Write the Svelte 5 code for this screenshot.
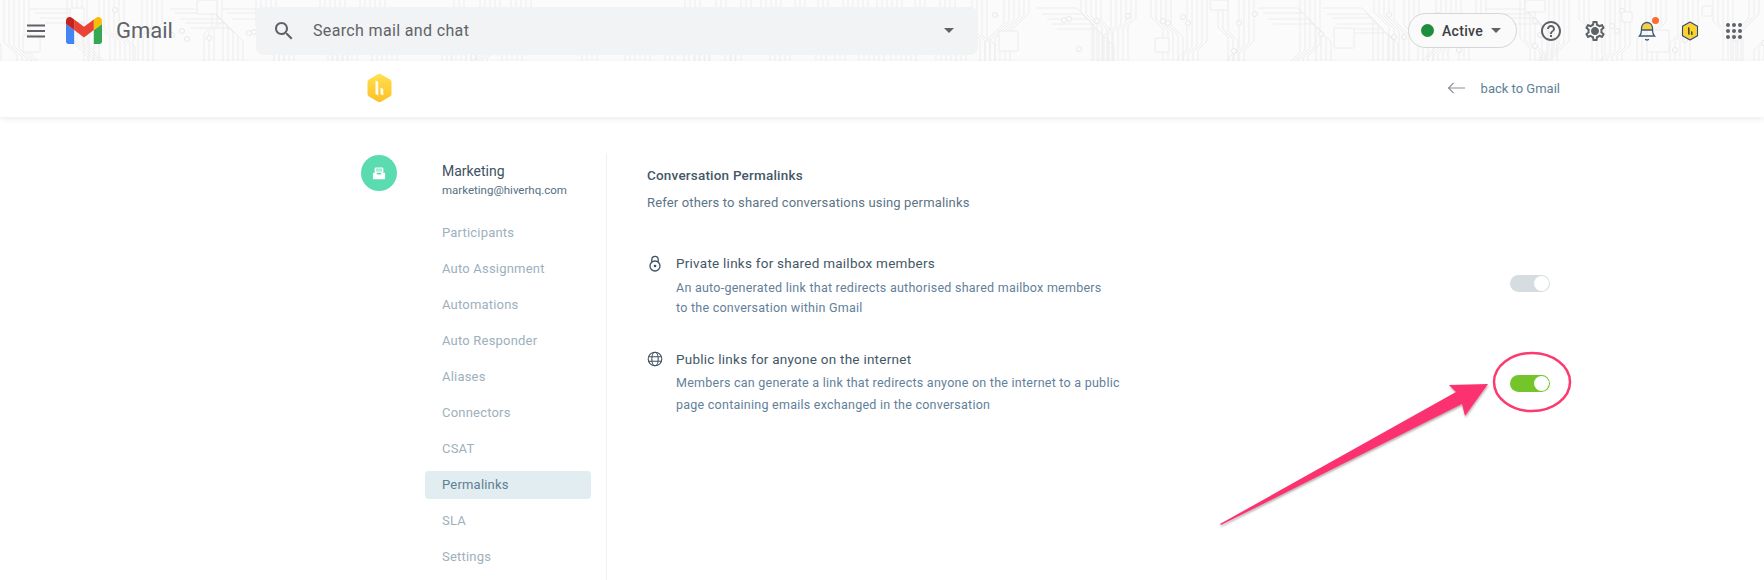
<script lang="ts">
	const navItems = [
		'Participants',
		'Auto Assignment',
		'Automations',
		'Auto Responder',
		'Aliases',
		'Connectors',
		'CSAT',
		'Permalinks',
		'SLA',
		'Settings'
	];

	// Circuit board texture: bundles of parallel traces with 45 degree bends
	function buildTraces() {
		let seed = 4242;
		const rnd = () => {
			seed = (seed * 16807) % 2147483647;
			return seed / 2147483647;
		};
		const paths: string[] = [];
		const pads: { x: number; y: number }[] = [];
		let x = -20;
		while (x < 1780) {
			const lines = 3 + Math.floor(rnd() * 4);
			const gap = 5;
			const dir = rnd() < 0.5 ? -1 : 1;
			const bend = 8 + Math.floor(rnd() * 14);
			const split = 10 + Math.floor(rnd() * 34);
			const horizontal = rnd() < 0.25;
			for (let i = 0; i < lines; i++) {
				const lx = x + i * gap;
				const off = dir > 0 ? i * 2 : (lines - i) * 2;
				const top = split + off;
				if (horizontal) {
					const yy = 8 + i * gap + Math.floor(rnd() * 2);
					paths.push(`M${lx - 10} ${yy}L${lx + 30} ${yy}L${lx + 30 + bend} ${yy + bend}L${lx + 30 + bend} 62`);
				} else {
					paths.push(`M${lx} -2L${lx} ${top}L${lx + dir * bend} ${top + bend}L${lx + dir * bend} 62`);
				}
				if (rnd() < 0.3) pads.push({ x: lx + dir * bend, y: 10 + Math.floor(rnd() * 42) });
			}
			x += lines * gap + 4 + Math.floor(rnd() * 10);
		}
		return { paths, pads };
	}

	const traces = buildTraces();
	const chips = [
		{ x: 23, y: 35, w: 17, h: 17 },
		{ x: 197, y: 0, w: 20, h: 14 },
		{ x: 70, y: 8, w: 14, h: 14 },
		{ x: 999, y: 31, w: 19, h: 20 },
		{ x: 1334, y: 28, w: 20, h: 20 },
		{ x: 1525, y: 0, w: 20, h: 12 },
		{ x: 1647, y: 30, w: 22, h: 22 },
		{ x: 1622, y: 12, w: 10, h: 10 },
		{ x: 1702, y: 6, w: 10, h: 10 },
		{ x: 1210, y: 0, w: 18, h: 10 },
		{ x: 1155, y: 38, w: 14, h: 14 }
	];
</script>

<header class="topbar">
	<svg class="circuit" width="1764" height="61" aria-hidden="true">
		{#each traces.paths as d}
			<path {d} fill="none" stroke="#ededed" stroke-width="1" />
		{/each}
		{#each traces.pads as p}
			<circle cx={p.x} cy={p.y} r="2.500" fill="#fbfbfb" stroke="#e9e9e9" />
		{/each}
		{#each chips as c}
			<rect x={c.x} y={c.y} width={c.w} height={c.h} rx="1" fill="#fbfbfb" stroke="#ececec" />
		{/each}
	</svg>

	<div class="brand">
		<svg class="menu" width="18" height="14" viewBox="0 0 18 14" aria-hidden="true">
			<path d="M0 1.500h18M0 7h18M0 12.500h18" stroke="#5f6368" stroke-width="2" />
		</svg>
		<svg class="m-logo" width="36" height="27" viewBox="52 42 88 66" aria-hidden="true">
			<path fill="#4285f4" d="M58 108h14V74L52 59v43c0 3.320 2.690 6 6 6" />
			<path fill="#34a853" d="M120 108h14c3.320 0 6-2.690 6-6V59l-20 15" />
			<path fill="#fbbc04" d="M120 48v26l20-15v-8c0-7.420-8.470-11.650-14.400-7.200" />
			<path fill="#ea4335" d="M72 74V48l24 18 24-18v26L96 92" />
			<path fill="#c5221f" d="M52 51v8l20 15V48l-5.600-4.200c-5.940-4.450-14.400-.22-14.400 7.200" />
		</svg>
		<span class="wordmark">Gmail</span>
	</div>

	<div class="search">
		<svg width="24" height="24" viewBox="0 0 24 24" fill="#5f6368" aria-hidden="true">
			<path
				d="M15.500 14h-.79l-.28-.27C15.410 12.590 16 11.110 16 9.500 16 5.910 13.090 3 9.500 3S3 5.910 3 9.500 5.910 16 9.500 16c1.610 0 3.090-.59 4.230-1.570l.27.28v.79l5 4.990L20.490 19l-4.990-5zm-6 0C7.010 14 5 11.990 5 9.500S7.010 5 9.500 5 14 7.010 14 9.500 11.990 14 9.500 14z"
			/>
		</svg>
		<span class="search-text">Search mail and chat</span>
		<span class="caret search-caret"></span>
	</div>

	<div class="tools">
		<div class="status">
			<span class="dot"></span>
			<span class="status-label">Active</span>
			<span class="caret small"></span>
		</div>
		<svg class="help" width="24" height="24" viewBox="0 0 24 24" fill="#5f6368" aria-hidden="true">
			<path
				d="M11 18h2v-2h-2v2zm1-16C6.480 2 2 6.480 2 12s4.480 10 10 10 10-4.480 10-10S17.520 2 12 2zm0 18c-4.410 0-8-3.590-8-8s3.590-8 8-8 8 3.590 8 8-3.590 8-8 8zm0-14c-2.210 0-4 1.790-4 4h2c0-1.100.9-2 2-2s2 .9 2 2c0 2-3 1.750-3 5h2c0-2.250 3-2.500 3-5 0-2.210-1.790-4-4-4z"
			/>
		</svg>
		<svg class="gear" width="24" height="24" viewBox="0 0 24 24" fill="#5f6368" aria-hidden="true">
			<path
				d="M19.430 12.980c.04-.32.07-.64.07-.98s-.03-.66-.07-.98l2.110-1.650c.19-.15.24-.42.12-.64l-2-3.460c-.12-.22-.39-.3-.61-.22l-2.490 1c-.52-.4-1.080-.73-1.690-.98l-.38-2.650C14.460 2.180 14.250 2 14 2h-4c-.25 0-.46.18-.49.42l-.38 2.650c-.61.25-1.170.59-1.690.98l-2.490-1c-.23-.09-.49 0-.61.22l-2 3.460c-.13.22-.07.49.12.64l2.110 1.650c-.04.32-.07.65-.07.98s.03.66.07.98l-2.110 1.650c-.19.15-.24.42-.12.64l2 3.460c.12.22.39.3.61.22l2.490-1c.52.4 1.080.73 1.690.98l.38 2.650c.03.24.24.42.49.42h4c.25 0 .46-.18.49-.42l.38-2.650c.61-.25 1.170-.59 1.690-.98l2.490 1c.23.09.49 0 .61-.22l2-3.460c.12-.22.07-.49-.12-.64l-2.110-1.650zM17.450 11.270c.04.31.05.52.05.73 0 .21-.02.43-.05.73l-.14 1.130.89.7 1.080.84-.7 1.210-1.270-.51-1.040-.42-.9.68c-.43.32-.84.56-1.250.73l-1.060.43-.16 1.130-.2 1.350h-1.400l-.19-1.350-.16-1.130-1.060-.43c-.43-.18-.83-.41-1.230-.71l-.91-.7-1.060.43-1.270.51-.7-1.210 1.080-.84.89-.7-.14-1.130c-.03-.31-.05-.54-.05-.74s.02-.43.05-.73l.14-1.130-.89-.7-1.080-.84.7-1.210 1.270.51 1.040.42.9-.68c.43-.32.84-.56 1.250-.73l1.060-.43.16-1.130.2-1.350h1.390l.19 1.350.16 1.130 1.060.43c.43.18.83.41 1.230.71l.91.7 1.060-.43 1.270-.51.7 1.210-1.070.85-.89.7.14 1.130zM12 8c-2.210 0-4 1.790-4 4s1.790 4 4 4 4-1.790 4-4-1.790-4-4-4z"
			/>
		</svg>
		<span class="bell-wrap">
			<svg width="22" height="24" viewBox="0 0 22 24" aria-hidden="true">
				<path d="M5.500 11V9a5.500 5.500 0 0 1 11 0v2z" fill="#f6cf47" />
				<path
					d="M3.500 17c1.600-1.600 2-3 2-6V9a5.500 5.500 0 0 1 11 0v2c0 3 .4 4.400 2 6zM5.500 11h11M9.500 20.500c1 .7 2 .7 3 0"
					fill="none"
					stroke="#3c5a78"
					stroke-width="1.300"
					stroke-linecap="round"
				/>
			</svg>
			<span class="bell-dot"></span>
		</span>
		<svg class="hiver-small" width="18" height="20" viewBox="0 0 18 20" aria-hidden="true">
			<path d="M9 1l7.500 4.300v9.400L9 19l-7.500-4.300V5.300z" fill="#fcd22c" stroke="#2e4a7d" stroke-width="1.100" stroke-linejoin="round" />
			<path d="M7 6l1.600.8v7.200L7 13.200zM10 10l1.500.8v3.400l-1.500-.8z" fill="#4b4a2c" />
		</svg>
		<svg class="apps" width="16" height="16" viewBox="0 0 16 16" fill="#5f6368" aria-hidden="true">
			{#each [2, 8, 14] as cy}
				{#each [2, 8, 14] as cx}
					<circle {cx} {cy} r="2" />
				{/each}
			{/each}
		</svg>
	</div>
</header>

<div class="subbar">
	<svg width="27" height="30" viewBox="2 0 24 30" aria-hidden="true">
		<defs>
			<linearGradient id="hex" x1="0" y1="0" x2="0" y2="1">
				<stop offset="0" stop-color="#ffe04f" />
				<stop offset="1" stop-color="#fdbf26" />
			</linearGradient>
		</defs>
		<path
			d="M12.500 1.200a3 3 0 0 1 3 0l9 5.200a3 3 0 0 1 1.500 2.600v12a3 3 0 0 1-1.500 2.600l-9 5.200a3 3 0 0 1-3 0l-9-5.200A3 3 0 0 1 2 21V9a3 3 0 0 1 1.500-2.600z"
			fill="url(#hex)"
		/>
		<path d="M10 7.500l2.800 1.400v13.500L10 21zM15 14.500l2.800 1.400v6.500L15 21z" fill="#fff" opacity="0.92" />
	</svg>
	<div class="back">
		<svg width="19" height="12" viewBox="0 0 19 12" aria-hidden="true">
			<path d="M18 6H1.500M6.500 1L1.500 6l5 5" fill="none" stroke="#8a9299" stroke-width="1.100" />
		</svg>
		<span>back to Gmail</span>
	</div>
</div>

<main class="page">
	<div class="avatar">
		<svg width="14" height="13" viewBox="0 0 16 14" aria-hidden="true">
			<path d="M3 1.500A1.500 1.500 0 0 1 4.500 0h7A1.500 1.500 0 0 1 13 1.500V6H3z" fill="#fff" />
			<path d="M4.500 2h7M4.500 4h7" stroke="#5bdcb0" stroke-width="1" />
			<path d="M1 7a1 1 0 0 1 1-1h3.500v2h5V6H14a1 1 0 0 1 1 1v5.500a1 1 0 0 1-1 1H2a1 1 0 0 1-1-1z" fill="#fff" />
		</svg>
	</div>

	<nav class="sidebar">
		<div class="mailbox-name">Marketing</div>
		<div class="mailbox-email">marketing@hiverhq.com</div>
		<ul>
			{#each navItems as item}
				<li class:active={item === 'Permalinks'}>{item}</li>
			{/each}
		</ul>
	</nav>

	<section class="content">
		<h1>Conversation Permalinks</h1>
		<p class="lead">Refer others to shared conversations using permalinks</p>

		<div class="setting first">
			<svg class="setting-icon" width="16" height="18" viewBox="0 0 16 18" aria-hidden="true">
				<g fill="none" stroke="#3f5261" stroke-width="1.300">
					<circle cx="8" cy="11" r="5" />
					<path d="M4.800 7V4.500a3.200 3.200 0 0 1 6.400 0V7" />
				</g>
				<circle cx="8" cy="11" r="1.300" fill="#3f5261" />
			</svg>
			<div class="setting-text">
				<h2>Private links for shared mailbox members</h2>
				<p>
					An auto-generated link that redirects authorised shared mailbox members<br />to the conversation within Gmail
				</p>
			</div>
			<span class="toggle"><span class="knob"></span></span>
		</div>

		<div class="setting second">
			<svg class="setting-icon" width="16" height="16" viewBox="0 0 16 16" aria-hidden="true">
				<g fill="none" stroke="#3f5261" stroke-width="1.100">
					<circle cx="8" cy="8" r="6.800" />
					<ellipse cx="8" cy="8" rx="3.200" ry="6.800" />
					<path d="M1.500 5.700h13M1.500 10.300h13" />
				</g>
			</svg>
			<div class="setting-text">
				<h2>Public links for anyone on the internet</h2>
				<p class="roomy">
					Members can generate a link that redirects anyone on the internet to a public<br />page containing emails exchanged in the conversation
				</p>
			</div>
			<span class="toggle on"><span class="knob"></span></span>
		</div>
	</section>
</main>

<!-- annotation drawn over the screenshot -->
<svg class="annotation" width="1764" height="580" aria-hidden="true">
	<defs>
		<filter id="arrow-shadow" x="-5%" y="-5%" width="110%" height="110%">
			<feDropShadow dx="0.500" dy="1.500" stdDeviation="1" flood-color="#000" flood-opacity="0.35" />
		</filter>
	</defs>
	<ellipse cx="1532" cy="382" rx="38" ry="29" fill="none" stroke="#fb3a70" stroke-width="2.500" />
	<path
		d="M1220 524L1456 392L1449 385L1488 384L1465 416L1462 404L1221 525z"
		fill="#fc3370"
		filter="url(#arrow-shadow)"
	/>
</svg>

<style>
	:global(body) {
		margin: 0;
		background: #fff;
		font-family: Roboto, 'Liberation Sans', sans-serif;
	}

	.topbar {
		position: relative;
		height: 61px;
		display: flex;
		align-items: center;
		background: #fbfbfb;
		overflow: hidden;
	}

	.circuit {
		position: absolute;
		inset: 0;
	}

	.brand,
	.search,
	.tools {
		position: relative;
	}

	.brand {
		display: flex;
		align-items: center;
		width: 256px;
		padding-left: 27px;
		box-sizing: border-box;
	}

	.m-logo {
		margin-left: 21px;
	}

	.wordmark {
		margin-left: 14px;
		font-size: 22px;
		color: #5f6368;
	}

	.search {
		width: 722px;
		height: 48px;
		display: flex;
		align-items: center;
		padding: 0 24px 0 16px;
		box-sizing: border-box;
		background: #f1f3f4;
		border-radius: 8px;
	}

	.search-text {
		margin-left: 17px;
		font-size: 16px;
		letter-spacing: 0.35px;
		color: #5f6368;
		flex: 1;
	}

	.caret {
		width: 0;
		height: 0;
		border-left: 5px solid transparent;
		border-right: 5px solid transparent;
		border-top: 5px solid #5f6368;
	}

	.tools {
		margin-left: 430px;
		display: flex;
		align-items: center;
	}

	.status {
		width: 109px;
		height: 35px;
		display: flex;
		align-items: center;
		padding-left: 12px;
		box-sizing: border-box;
		border: 1px solid #d5d6d8;
		border-radius: 18px;
		background: #fafafa;
	}

	.dot {
		width: 13px;
		height: 13px;
		border-radius: 50%;
		background: #1e8e3e;
	}

	.status-label {
		margin-left: 8px;
		font-size: 14px;
		font-weight: 500;
		letter-spacing: 0.3px;
		color: #3c4043;
	}

	.caret.small {
		margin-left: 8px;
		border-top-color: #5f6368;
	}

	.help {
		margin-left: 22px;
	}

	.gear {
		margin-left: 20px;
	}

	.bell-wrap {
		position: relative;
		display: block;
		width: 22px;
		height: 24px;
		margin-left: 29px;
	}

	.bell-wrap svg {
		display: block;
	}

	.bell-dot {
		position: absolute;
		right: -1px;
		top: -2px;
		width: 7px;
		height: 7px;
		border-radius: 50%;
		background: #ff6b2c;
	}

	.hiver-small {
		margin-left: 23px;
	}

	.apps {
		margin-left: 27px;
	}

	.subbar {
		position: relative;
		height: 56px;
		display: flex;
		align-items: center;
		justify-content: space-between;
		padding: 0 204px 2px 366px;
		box-sizing: border-box;
		background: #fff;
		box-shadow: 0 2px 6px rgba(0, 0, 0, 0.08);
	}

	.back {
		display: flex;
		align-items: center;
		gap: 15px;
		font-size: 13px;
		color: #5d7f95;
	}

	.page {
		display: flex;
		padding: 36px 0 0 361px;
		height: 463px;
		box-sizing: border-box;
		overflow: hidden;
	}

	.avatar {
		width: 36px;
		height: 36px;
		border-radius: 50%;
		background: #5bdcb0;
		display: flex;
		align-items: center;
		justify-content: center;
		flex-shrink: 0;
		margin-top: 2px;
	}

	.sidebar {
		width: 181px;
		height: 427px;
		margin-left: 28px;
		border-right: 1px solid #eef0f2;
	}

	.mailbox-name {
		margin: 9px 0 0 17px;
		font-size: 14px;
		line-height: 18px;
		color: #40515f;
	}

	.mailbox-email {
		margin: 1px 0 0 17px;
		font-size: 11.500px;
		line-height: 18px;
		color: #55707f;
	}

	ul {
		list-style: none;
		margin: 16px 0 0;
		padding: 0;
		width: 166px;
	}

	li {
		height: 36px;
		line-height: 36px;
		padding-left: 17px;
		font-size: 13px;
		letter-spacing: 0.2px;
		color: #9db0bd;
		box-sizing: border-box;
		border-radius: 4px;
	}

	li.active {
		height: 28px;
		line-height: 28px;
		margin: 4px 0;
		background: #e2edf1;
		color: #5f7f93;
	}

	.content {
		flex: 1;
		padding: 13px 0 0 40px;
	}

	h1 {
		margin: 0;
		font-size: 13.500px;
		font-weight: 500;
		line-height: 18px;
		color: #445767;
		letter-spacing: 0.2px;
	}

	.lead {
		margin: 10px 0 0;
		font-size: 13px;
		line-height: 18px;
		letter-spacing: 0.15px;
		color: #5d7486;
	}

	.setting {
		display: flex;
		align-items: flex-start;
	}

	.setting.first {
		margin-top: 42px;
	}

	.setting.second {
		margin-top: 32px;
	}

	.setting-icon {
		margin-top: 1px;
		flex-shrink: 0;
	}

	.setting-text {
		margin-left: 13px;
		width: 834px;
	}

	h2 {
		margin: 0;
		font-size: 13.500px;
		font-weight: 400;
		line-height: 18px;
		letter-spacing: 0.25px;
		color: #445767;
	}

	.setting-text p {
		margin: 6px 0 0;
		font-size: 12.500px;
		line-height: 20px;
		letter-spacing: 0.25px;
		color: #62809a;
	}

	.setting-text p.roomy {
		margin-top: 4px;
		line-height: 22px;
	}

	.toggle {
		position: relative;
		width: 40px;
		height: 17px;
		margin-top: 21px;
		border-radius: 9px;
		background: #d5dde1;
		flex-shrink: 0;
	}

	.toggle.on {
		margin-top: 25px;
		background: #73c52a;
	}

	.knob {
		position: absolute;
		right: 1px;
		top: 1px;
		width: 15px;
		height: 15px;
		border-radius: 50%;
		background: #fff;
	}

	.annotation {
		position: absolute;
		left: 0;
		top: 0;
		pointer-events: none;
	}
</style>
